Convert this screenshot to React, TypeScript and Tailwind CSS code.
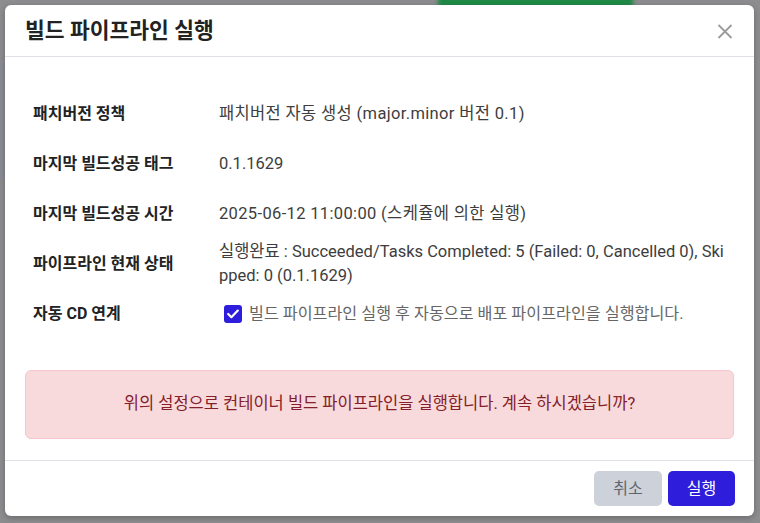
import React from "react";

const rows: { label: string; value: React.ReactNode; track: boolean }[] = [
  { label: "패치버전 정책", value: "패치버전 자동 생성 (major.minor 버전 0.1)", track: true },
  { label: "마지막 빌드성공 태그", value: "0.1.1629", track: false },
  { label: "마지막 빌드성공 시간", value: "2025-06-12 11:00:00 (스케쥴에 의한 실행)", track: true },
  {
    label: "파이프라인 현재 상태",
    value: (
      <>
        실행완료 : Succeeded/Tasks Completed: 5 (Failed: 0, Cancelled 0), Ski
        <br />
        pped: 0 (0.1.1629)
      </>
    ),
    track: false,
  },
];

export default function App() {
  return (
    <div
      className="relative w-[760px] h-[523px] overflow-hidden bg-[#8d8d8f]"
      style={{ fontFamily: "Roboto, 'Noto Sans CJK KR', sans-serif" }}
    >
      <div className="absolute left-[438px] top-[-6px] w-[195px] h-[14px] bg-[#1f8a45] blur-[2px]" />
      <div className="absolute left-0 top-[60px] w-[6px] h-[120px] bg-[#8a8a98] blur-[2px]" />
      <div className="relative ml-[5px] mt-[5px] w-[749px] h-[511px] bg-white rounded-[6px] flex flex-col shadow-[0_2px_6px_rgba(0,0,0,0.25)]">
        <div className="h-[52px] flex items-center justify-between pl-5 pr-5 border-b border-[#dee2e6]">
          <h5 className="text-[21.5px] font-bold text-[#222] leading-none mt-[1px]">빌드 파이프라인 실행</h5>
          <button className="w-[16px] h-[16px] flex items-center justify-center mr-[1px]">
            <svg width="16" height="16" viewBox="0 0 16 16" fill="none">
              <path d="M1.5 2 L14.5 15 M14.5 2 L1.5 15" stroke="#9a9a9a" strokeWidth="1.8" />
            </svg>
          </button>
        </div>
        <div className="flex-1 px-5 pt-[32px]">
          <div className="flex flex-col">
            {rows.map((r) => (
              <div key={r.label} className="flex items-center h-[50px]">
                <div className="w-[186px] pl-2 text-[16px] leading-[24px] font-bold text-[#222]">{r.label}</div>
                <div
                  className={
                    r.track
                      ? "flex-1 pl-2 text-[16.5px] leading-[24px] text-[#3d3d3d] break-all tracking-[0.35px]"
                      : "flex-1 pl-2 text-[16.5px] leading-[24px] text-[#3d3d3d] break-all"
                  }
                >
                  {r.value}
                </div>
              </div>
            ))}
            <div className="flex items-center h-[50px]">
              <div className="w-[186px] pl-2 text-[16px] leading-[24px] font-bold text-[#222]">자동 CD 연계</div>
              <div className="flex-1 pl-[13px] flex items-center gap-[7px] text-[16.2px] text-[#666]">
                <span className="w-[18px] h-[18px] rounded-[3px] bg-[#2e1ddb] flex items-center justify-center">
                  <svg width="12" height="10" viewBox="0 0 12 10" fill="none">
                    <path d="M1.2 5 L4.4 8.2 L10.8 1.6" stroke="white" strokeWidth="2.2" strokeLinecap="round" strokeLinejoin="round" />
                  </svg>
                </span>
                <span className="leading-[24px] -mt-[1px]">빌드 파이프라인 실행 후 자동으로 배포 파이프라인을 실행합니다.</span>
              </div>
            </div>
          </div>
          <div className="mt-[31px] h-[69px] rounded-[6px] bg-[#f8dadc] border border-[#f5c6cb] flex items-center justify-center text-[16.5px] text-[#842029]">
            위의 설정으로 컨테이너 빌드 파이프라인을 실행합니다. 계속 하시겠습니까?
          </div>
        </div>
        <div className="h-[56px] border-t border-[#dee2e6] flex items-center justify-end gap-[6px] pr-[19px]">
          <button className="w-[68px] h-[35px] rounded-[5px] bg-[#cdd1d9] text-[16px] text-[#5f6670]">취소</button>
          <button className="w-[67px] h-[35px] rounded-[5px] bg-[#2e1ddb] text-[16px] text-white">실행</button>
        </div>
      </div>
    </div>
  );
}
